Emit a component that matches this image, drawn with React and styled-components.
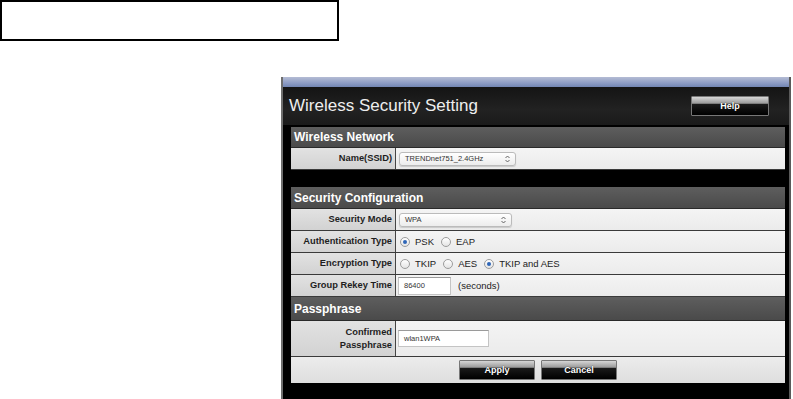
import styled, { createGlobalStyle } from "styled-components";

const GlobalStyle = createGlobalStyle`
  html, body {
    margin: 0;
    padding: 0;
    background: #fff;
    overflow: hidden;
  }
  body {
    font-family: "Liberation Sans", Arial, sans-serif;
  }
`;

const Page = styled.div`
  width: 793px;
  height: 399px;
  overflow: hidden;
`;

const TopBox = styled.div`
  box-sizing: border-box;
  width: 339px;
  height: 41px;
  border: 2px solid #000;
`;

const Panel = styled.div`
  box-sizing: border-box;
  width: 510px;
  margin: 36px 0 0 281px;
  padding-bottom: 40px;
  background: #000;
  border-left: 2px solid #6e6e6e;
  border-right: 2px solid #5a5a5a;
`;

const TopStrip = styled.div`
  height: 10px;
  background: linear-gradient(#b4bcd4, #8d9cc4 60%, #7285b2);
`;

const TitleBar = styled.div`
  height: 38px;
  display: flex;
  align-items: center;
  justify-content: space-between;
  padding: 0 20px 0 6px;
  background: linear-gradient(#141414, #222 60%, #1a1a1a);
`;

const Title = styled.h1`
  margin: 0;
  font-size: 17px;
  font-weight: normal;
  color: #eeeeee;
`;

const GlossButton = styled.button`
  box-sizing: border-box;
  width: ${(p) => p.$w || 76}px;
  height: 20px;
  padding: 0;
  border: 1px solid #777;
  border-radius: 1px;
  background: linear-gradient(#d6d6d6, #9a9a9a 35%, #1a1a1a 40%, #000);
  color: #fff;
  font-family: "Liberation Sans", Arial, sans-serif;
  font-weight: bold;
  font-size: 9px;
  text-shadow: 0 0 1px #000;
`;

const Body = styled.div`
  padding: 2px 4px 0 8px;
  display: flex;
  flex-direction: column;
`;

const Section = styled.div`
  display: flex;
  flex-direction: column;
  margin-bottom: ${(p) => p.$gap || 0}px;
`;

const SectionHeader = styled.div`
  box-sizing: border-box;
  height: ${(p) => p.$h || 21}px;
  display: flex;
  align-items: center;
  padding-left: 3px;
  background: linear-gradient(#5e5e5e, #4a4a4a);
  border-bottom: 1px solid #2a2a2a;
  color: #fff;
  font-weight: bold;
  font-size: 12px;
`;

const Row = styled.div`
  box-sizing: border-box;
  display: grid;
  grid-template-columns: 105px 1fr;
  height: ${(p) => p.$h || 22}px;
  border-bottom: 1px solid #3a3a3a;
`;

const Label = styled.div`
  display: flex;
  align-items: center;
  justify-content: flex-end;
  text-align: right;
  padding-right: 3px;
  background: linear-gradient(#e2e2e2, #d2d2d2);
  border-right: 1px solid #444;
  color: #1e1e1e;
  font-weight: bold;
  font-size: 9.3px;
  line-height: 13px;
`;

const Value = styled.div`
  display: flex;
  align-items: center;
  gap: 7px;
  padding-left: 2px;
  background: linear-gradient(#f4f4f4, #ebebeb);
  color: #222;
  font-size: 9.5px;
`;

const SelectBox = styled.div`
  box-sizing: border-box;
  width: ${(p) => p.$w}px;
  height: 14px;
  margin-left: 1px;
  display: flex;
  align-items: center;
  justify-content: space-between;
  padding: 0 5px;
  border: 1px solid #bbb;
  border-radius: 3px;
  background: linear-gradient(#ffffff, #ececec);
  box-shadow: 0 1px 1px rgba(0, 0, 0, 0.15);
  font-size: 7.5px;
  color: #333;
`;

const TextInput = styled.div`
  box-sizing: border-box;
  width: ${(p) => p.$w}px;
  height: ${(p) => p.$h || 18}px;
  display: flex;
  align-items: center;
  padding-left: 5px;
  background: #fff;
  border: 1px solid #c4c4c4;
  border-top-color: #9a9a9a;
  font-size: 7.5px;
  color: #333;
`;

const Option = styled.label`
  display: flex;
  align-items: center;
  gap: 5px;
  margin-left: ${(p) => (p.$first ? 2 : 0)}px;
`;

const Radio = styled.span`
  box-sizing: border-box;
  width: 10px;
  height: 10px;
  border-radius: 50%;
  border: 1px solid #9c9c9c;
  background: linear-gradient(#fff, #e4e4e4);
  display: flex;
  align-items: center;
  justify-content: center;
  &::after {
    content: "";
    width: 4px;
    height: 4px;
    border-radius: 50%;
    background: ${(p) => (p.$checked ? "#2f66b8" : "transparent")};
  }
`;

const ButtonRow = styled.div`
  height: 26px;
  display: flex;
  align-items: center;
  justify-content: center;
  gap: 6px;
  background: linear-gradient(#ececec, #dedede);
`;

const Arrows = () => (
  <svg width="5" height="8" viewBox="0 0 5 8">
    <path d="M0.5 3 L2.5 1 L4.5 3 M0.5 5 L2.5 7 L4.5 5" fill="none" stroke="#555" strokeWidth="0.9" />
  </svg>
);

const RadioOption = ({ label, checked, first }) => (
  <Option $first={first}>
    <Radio $checked={checked} />
    {label}
  </Option>
);

export default function App() {
  return (
    <Page>
      <GlobalStyle />
      <TopBox />
      <Panel>
        <TopStrip />
        <TitleBar>
          <Title>Wireless Security Setting</Title>
          <GlossButton $w={78}>Help</GlossButton>
        </TitleBar>
        <Body>
          <Section $gap={17}>
            <SectionHeader $h={21}>Wireless Network</SectionHeader>
            <Row>
              <Label>Name(SSID)</Label>
              <Value>
                <SelectBox $w={117}>
                  TRENDnet751_2.4GHz
                  <Arrows />
                </SelectBox>
              </Value>
            </Row>
          </Section>
          <Section>
            <SectionHeader $h={22}>Security Configuration</SectionHeader>
            <Row>
              <Label>Security Mode</Label>
              <Value>
                <SelectBox $w={113}>
                  WPA
                  <Arrows />
                </SelectBox>
              </Value>
            </Row>
            <Row>
              <Label>Authentication Type</Label>
              <Value>
                <RadioOption first checked label="PSK" />
                <RadioOption label="EAP" />
              </Value>
            </Row>
            <Row>
              <Label>Encryption Type</Label>
              <Value>
                <RadioOption first label="TKIP" />
                <RadioOption label="AES" />
                <RadioOption checked label="TKIP and AES" />
              </Value>
            </Row>
            <Row>
              <Label>Group Rekey Time</Label>
              <Value>
                <TextInput $w={53}>86400</TextInput>
                <span>(seconds)</span>
              </Value>
            </Row>
          </Section>
          <Section>
            <SectionHeader $h={24}>Passphrase</SectionHeader>
            <Row $h={36}>
              <Label>
                Confirmed
                <br />
                Passphrase
              </Label>
              <Value>
                <TextInput $w={91} $h={17}>wlan1WPA</TextInput>
              </Value>
            </Row>
            <ButtonRow>
              <GlossButton $w={76}>Apply</GlossButton>
              <GlossButton $w={76}>Cancel</GlossButton>
            </ButtonRow>
          </Section>
        </Body>
      </Panel>
    </Page>
  );
}
